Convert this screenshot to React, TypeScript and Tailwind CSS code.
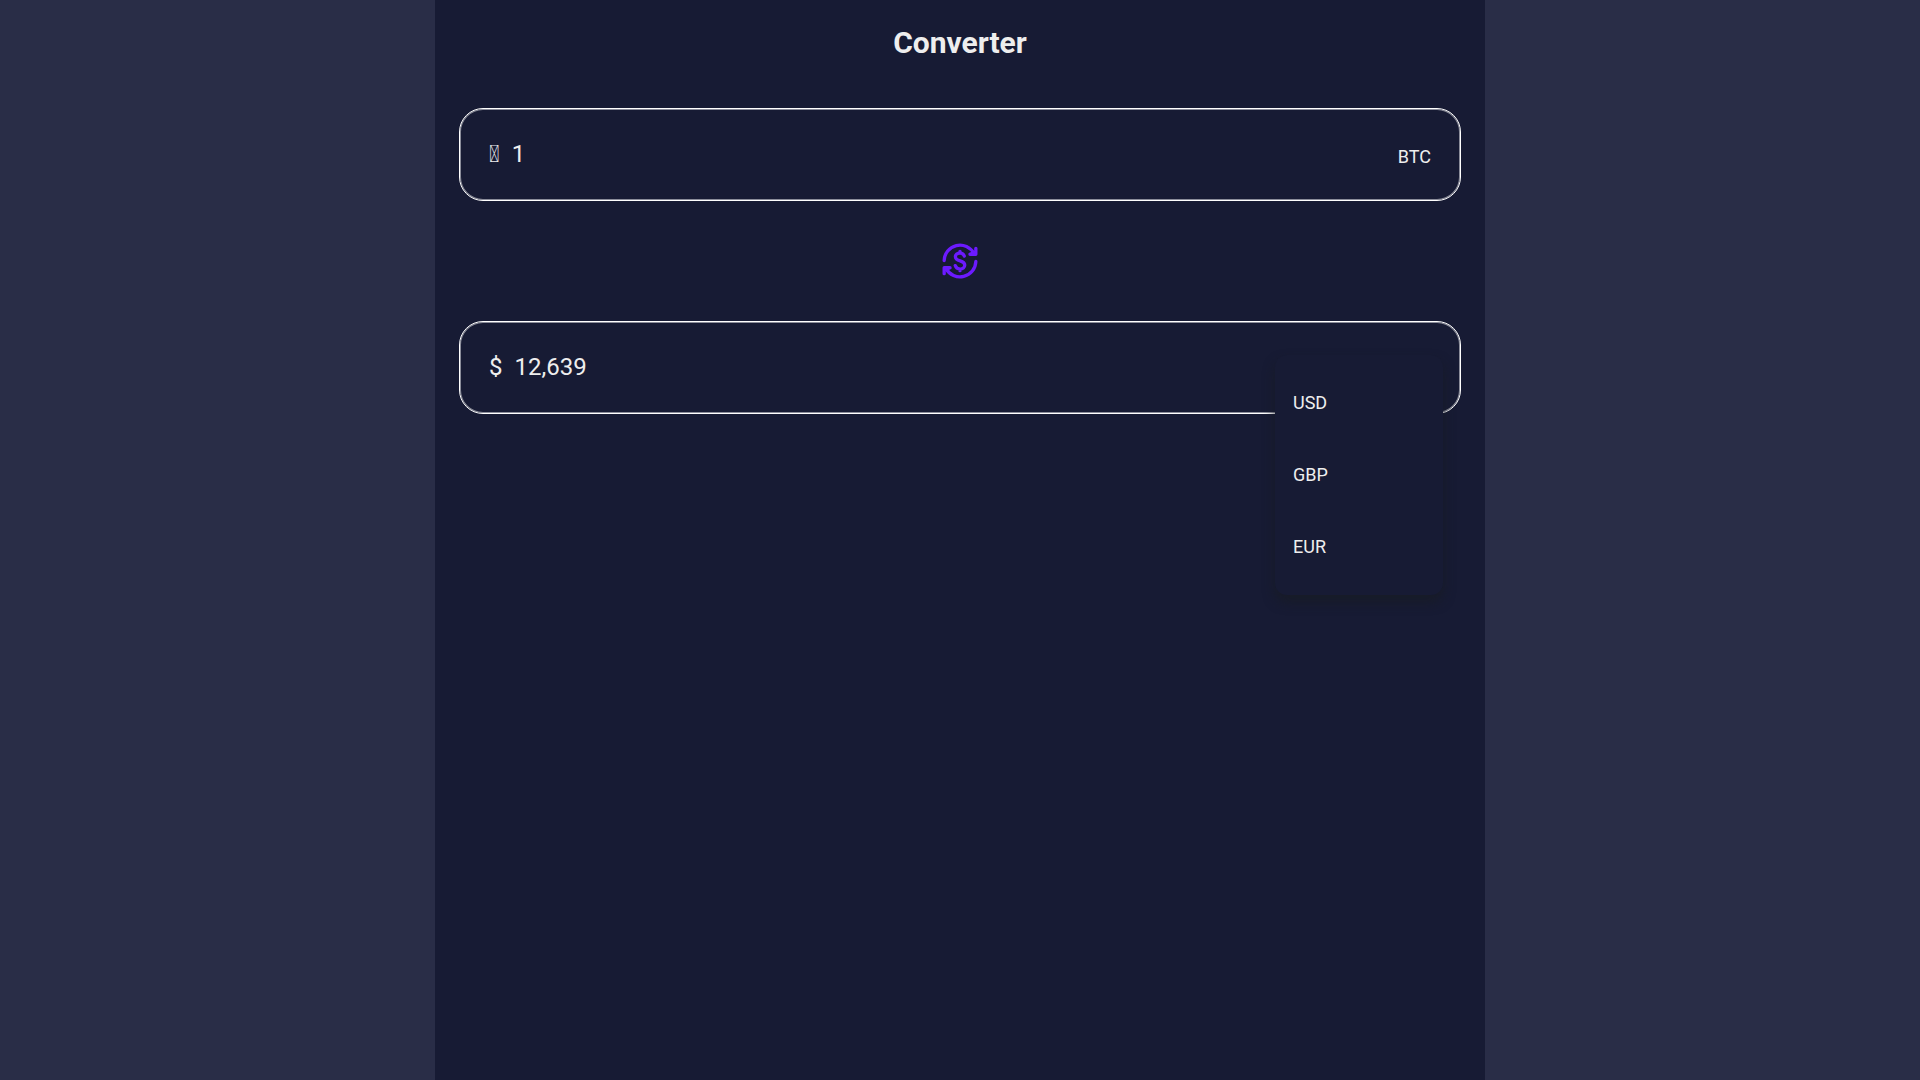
import { useState } from "react";

const currencies = [
  { code: "USD", symbol: "$", amount: "12,639" },
  { code: "GBP", symbol: "£", amount: "9,821" },
  { code: "EUR", symbol: "€", amount: "10,742" },
];

const fieldClass =
  "relative flex h-[93px] items-center gap-3 rounded-3xl border border-white px-[29px] text-[#eeeeee] shadow-[inset_0_0_0_1px_rgba(255,255,255,0.5)]";

const valueClass = "min-w-0 flex-1 bg-transparent pb-0.5 text-2xl outline-none";

function ExchangeIcon() {
  return (
    <svg
      viewBox="0 0 24 24"
      className="size-9.5"
      fill="none"
      stroke="currentColor"
      strokeWidth="2.1"
      strokeLinecap="round"
      strokeLinejoin="round"
      aria-hidden="true"
    >
      <path d="M2 11.7A10 10 0 0 1 20.8 7.2" />
      <path d="M22 12.3A10 10 0 0 1 3.2 16.8" />
      <path d="M22 4V7.8H18.3L20.6 6.8" />
      <path d="M2 20V16.2H5.7L3.4 17.2" />
      <path d="M14.7 8.9C14.3 7.7 13.2 7 12 7C10.3 7 9.1 8 9.1 9.3C9.1 10.9 10.7 11.5 12.1 11.9C13.8 12.4 15 13.2 15 14.6C15 16.1 13.7 17.1 12.1 17.1C10.6 17.1 9.4 16.2 9 14.9M12 5.9V7M12 17.1V18.1" />
    </svg>
  );
}

export default function App() {
  const [selected, setSelected] = useState(currencies[0]);
  const [amount, setAmount] = useState("1");

  return (
    <div className="min-h-screen bg-[#292d47] font-['Roboto',sans-serif]">
      <main className="mx-auto min-h-screen max-w-[1050px] bg-[#171b34] px-6">
        <h1 className="flex h-21 items-center justify-center pt-0.5 text-3xl font-bold text-[#eeeeee]">
          Converter
        </h1>

        <div className={`${fieldClass} mt-6`}>
          <label htmlFor="from" aria-label="Bitcoin" className="pb-0.5 text-2xl font-medium">
            {"\uE0FF"}
          </label>
          <input
            id="from"
            value={amount}
            onChange={(e) => setAmount(e.target.value)}
            className={valueClass}
          />
          <span className="pt-1 text-lg">BTC</span>
        </div>

        <div className="flex h-30 items-center justify-center">
          <button type="button" aria-label="Swap currencies" className="text-[#6c1aff]">
            <ExchangeIcon />
          </button>
        </div>

        <div className={fieldClass}>
          <label htmlFor="to" className="pb-0.5 text-2xl">
            {selected.symbol}
          </label>
          <input id="to" readOnly value={selected.amount} className={valueClass} />
          <div
            role="listbox"
            aria-label="Currency"
            className="absolute top-[33px] right-[17px] flex w-42 flex-col rounded-xl bg-[#171b34] py-3 shadow-[0_7px_12px_rgba(24,28,36,0.8)]"
          >
            {currencies.map((c) => (
              <button
                key={c.code}
                type="button"
                role="option"
                aria-selected={c.code === selected.code}
                onClick={() => setSelected(c)}
                className="h-18 px-4.5 text-left text-lg"
              >
                {c.code}
              </button>
            ))}
          </div>
        </div>
      </main>
    </div>
  );
}
